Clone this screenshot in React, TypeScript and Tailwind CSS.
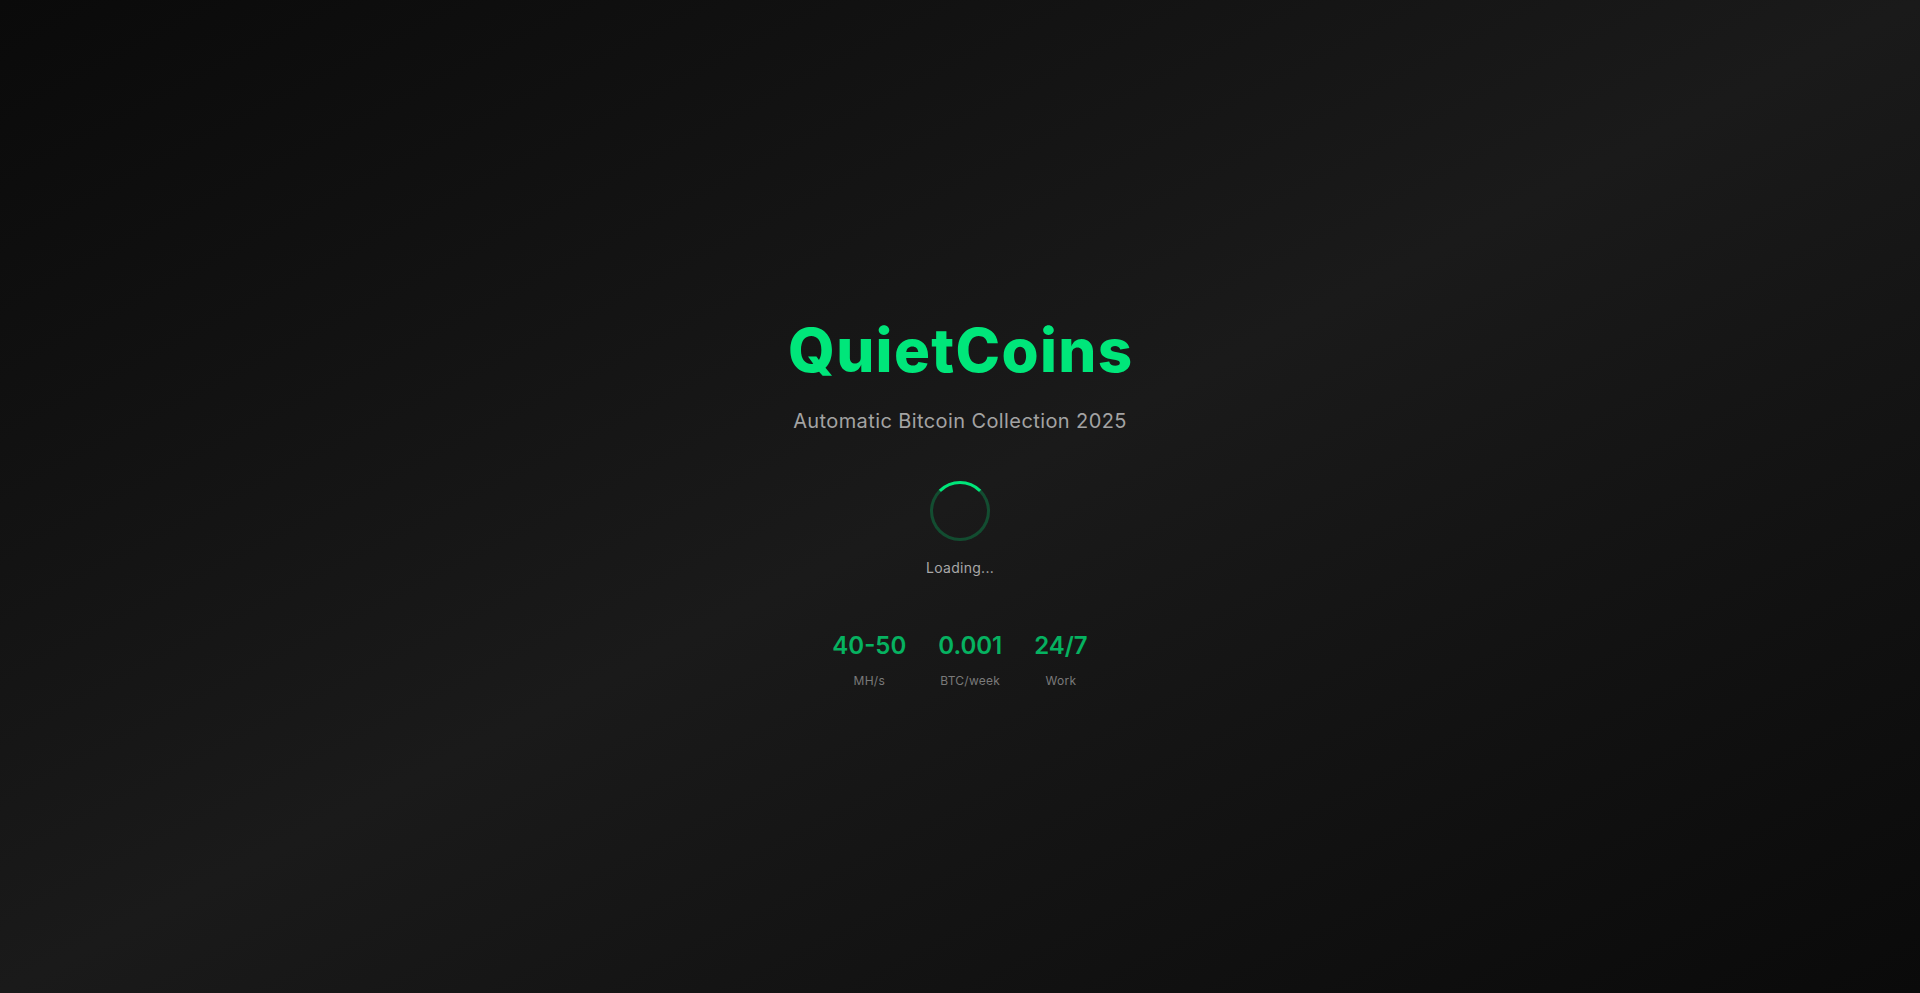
import React from "react";

const stats = [
  { value: "40-50", label: "MH/s" },
  { value: "0.001", label: "BTC/week" },
  { value: "24/7", label: "Work" },
];

export default function App() {
  return (
    <div
      className="min-h-screen w-full flex flex-col items-center justify-center pt-[16px] bg-gradient-to-br from-[#0a0a0a] via-[#1a1a1a] to-[#0a0a0a]"
      style={{ fontFamily: "Inter, 'Noto Sans', sans-serif" }}
    >
      <h1 className="text-6xl font-extrabold text-[#00e67a] tracking-[0.022em] pl-[0.022em]">QuietCoins</h1>
      <p className="mt-[27px] text-xl text-[#a3a3a3] tracking-[0.02em]">Automatic Bitcoin Collection 2025</p>
      <div className="mt-[46px] w-[60px] h-[60px] rounded-full border-[3px] border-[#00e67a]/25 border-t-[#00e67a]" />
      <p className="mt-[17px] text-sm text-[#a8a8a8] tracking-[0.02em]">Loading...</p>
      <div className="mt-[52px] flex items-start gap-8">
        {stats.map((s) => (
          <div key={s.label} className="flex flex-col items-center">
            <div className="text-2xl font-semibold text-[#00e67a]/75">{s.value}</div>
            <div className="mt-[11px] text-xs text-[#7a7a7a] tracking-[0.02em]">{s.label}</div>
          </div>
        ))}
      </div>
    </div>
  );
}
